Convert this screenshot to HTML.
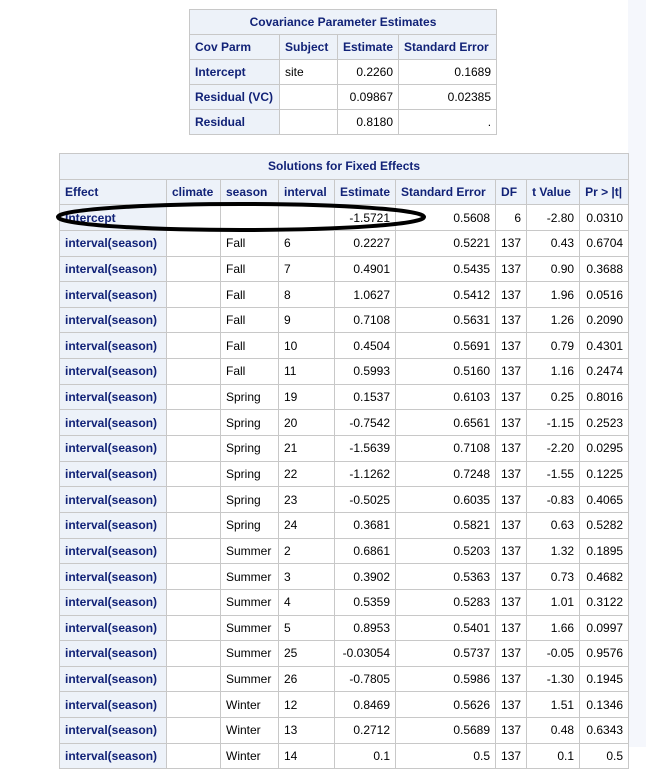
<!DOCTYPE html>
<html><head><style>
body{margin:0;width:646px;height:747px;overflow:hidden;background:#fff;font-family:"Liberation Sans",Arial,sans-serif;font-size:12px;position:relative}
.strip{position:absolute;left:628px;top:0;width:18px;height:747px;background:#f5f7fc}
table{position:absolute;border-collapse:collapse;table-layout:fixed;background:#fff}
td{border:1px solid #c8c8c8;padding:0 5px;height:24px;white-space:nowrap;overflow:hidden;color:#000}
.h{background:#edf2f9;color:#112277;font-weight:bold}
.t{text-align:center}
.r{text-align:right}
#t1{left:189px;top:9px}
#t2{left:59px;top:153px}
#t2 td{height:24.65px}
</style></head><body>
<div class="strip"></div>
<table id="t1">
<colgroup><col style="width:90px"><col style="width:58px"><col style="width:58px"><col style="width:98px"></colgroup>
<tr><td class="h t" colspan="4" style="height:24px">Covariance Parameter Estimates</td></tr>
<tr><td class="h">Cov Parm</td><td class="h">Subject</td><td class="h">Estimate</td><td class="h">Standard Error</td></tr>
<tr><td class="h">Intercept</td><td>site</td><td class="r">0.2260</td><td class="r">0.1689</td></tr>
<tr><td class="h">Residual (VC)</td><td></td><td class="r">0.09867</td><td class="r">0.02385</td></tr>
<tr><td class="h">Residual</td><td></td><td class="r">0.8180</td><td class="r">.</td></tr>
</table>
<table id="t2">
<colgroup><col style="width:107px"><col style="width:54px"><col style="width:58px"><col style="width:56px"><col style="width:60px"><col style="width:100px"><col style="width:30px"><col style="width:53px"><col style="width:49px"></colgroup>
<tr><td class="h t" colspan="9">Solutions for Fixed Effects</td></tr>
<tr><td class="h">Effect</td><td class="h">climate</td><td class="h">season</td><td class="h">interval</td><td class="h">Estimate</td><td class="h">Standard Error</td><td class="h">DF</td><td class="h">t Value</td><td class="h">Pr &gt; |t|</td></tr>
<tr><td class="h">Intercept</td><td></td><td></td><td></td><td class="r">-1.5721</td><td class="r">0.5608</td><td class="r">6</td><td class="r">-2.80</td><td class="r">0.0310</td></tr>
<tr><td class="h">interval(season)</td><td></td><td>Fall</td><td>6</td><td class="r">0.2227</td><td class="r">0.5221</td><td class="r">137</td><td class="r">0.43</td><td class="r">0.6704</td></tr>
<tr><td class="h">interval(season)</td><td></td><td>Fall</td><td>7</td><td class="r">0.4901</td><td class="r">0.5435</td><td class="r">137</td><td class="r">0.90</td><td class="r">0.3688</td></tr>
<tr><td class="h">interval(season)</td><td></td><td>Fall</td><td>8</td><td class="r">1.0627</td><td class="r">0.5412</td><td class="r">137</td><td class="r">1.96</td><td class="r">0.0516</td></tr>
<tr><td class="h">interval(season)</td><td></td><td>Fall</td><td>9</td><td class="r">0.7108</td><td class="r">0.5631</td><td class="r">137</td><td class="r">1.26</td><td class="r">0.2090</td></tr>
<tr><td class="h">interval(season)</td><td></td><td>Fall</td><td>10</td><td class="r">0.4504</td><td class="r">0.5691</td><td class="r">137</td><td class="r">0.79</td><td class="r">0.4301</td></tr>
<tr><td class="h">interval(season)</td><td></td><td>Fall</td><td>11</td><td class="r">0.5993</td><td class="r">0.5160</td><td class="r">137</td><td class="r">1.16</td><td class="r">0.2474</td></tr>
<tr><td class="h">interval(season)</td><td></td><td>Spring</td><td>19</td><td class="r">0.1537</td><td class="r">0.6103</td><td class="r">137</td><td class="r">0.25</td><td class="r">0.8016</td></tr>
<tr><td class="h">interval(season)</td><td></td><td>Spring</td><td>20</td><td class="r">-0.7542</td><td class="r">0.6561</td><td class="r">137</td><td class="r">-1.15</td><td class="r">0.2523</td></tr>
<tr><td class="h">interval(season)</td><td></td><td>Spring</td><td>21</td><td class="r">-1.5639</td><td class="r">0.7108</td><td class="r">137</td><td class="r">-2.20</td><td class="r">0.0295</td></tr>
<tr><td class="h">interval(season)</td><td></td><td>Spring</td><td>22</td><td class="r">-1.1262</td><td class="r">0.7248</td><td class="r">137</td><td class="r">-1.55</td><td class="r">0.1225</td></tr>
<tr><td class="h">interval(season)</td><td></td><td>Spring</td><td>23</td><td class="r">-0.5025</td><td class="r">0.6035</td><td class="r">137</td><td class="r">-0.83</td><td class="r">0.4065</td></tr>
<tr><td class="h">interval(season)</td><td></td><td>Spring</td><td>24</td><td class="r">0.3681</td><td class="r">0.5821</td><td class="r">137</td><td class="r">0.63</td><td class="r">0.5282</td></tr>
<tr><td class="h">interval(season)</td><td></td><td>Summer</td><td>2</td><td class="r">0.6861</td><td class="r">0.5203</td><td class="r">137</td><td class="r">1.32</td><td class="r">0.1895</td></tr>
<tr><td class="h">interval(season)</td><td></td><td>Summer</td><td>3</td><td class="r">0.3902</td><td class="r">0.5363</td><td class="r">137</td><td class="r">0.73</td><td class="r">0.4682</td></tr>
<tr><td class="h">interval(season)</td><td></td><td>Summer</td><td>4</td><td class="r">0.5359</td><td class="r">0.5283</td><td class="r">137</td><td class="r">1.01</td><td class="r">0.3122</td></tr>
<tr><td class="h">interval(season)</td><td></td><td>Summer</td><td>5</td><td class="r">0.8953</td><td class="r">0.5401</td><td class="r">137</td><td class="r">1.66</td><td class="r">0.0997</td></tr>
<tr><td class="h">interval(season)</td><td></td><td>Summer</td><td>25</td><td class="r">-0.03054</td><td class="r">0.5737</td><td class="r">137</td><td class="r">-0.05</td><td class="r">0.9576</td></tr>
<tr><td class="h">interval(season)</td><td></td><td>Summer</td><td>26</td><td class="r">-0.7805</td><td class="r">0.5986</td><td class="r">137</td><td class="r">-1.30</td><td class="r">0.1945</td></tr>
<tr><td class="h">interval(season)</td><td></td><td>Winter</td><td>12</td><td class="r">0.8469</td><td class="r">0.5626</td><td class="r">137</td><td class="r">1.51</td><td class="r">0.1346</td></tr>
<tr><td class="h">interval(season)</td><td></td><td>Winter</td><td>13</td><td class="r">0.2712</td><td class="r">0.5689</td><td class="r">137</td><td class="r">0.48</td><td class="r">0.6343</td></tr>
<tr><td class="h">interval(season)</td><td></td><td>Winter</td><td>14</td><td class="r">0.1</td><td class="r">0.5</td><td class="r">137</td><td class="r">0.1</td><td class="r">0.5</td></tr>
</table>
<svg style="position:absolute;left:0;top:0" width="646" height="747"><ellipse cx="241" cy="217" rx="183" ry="13" fill="none" stroke="#000" stroke-width="4"/></svg>
</body></html>
